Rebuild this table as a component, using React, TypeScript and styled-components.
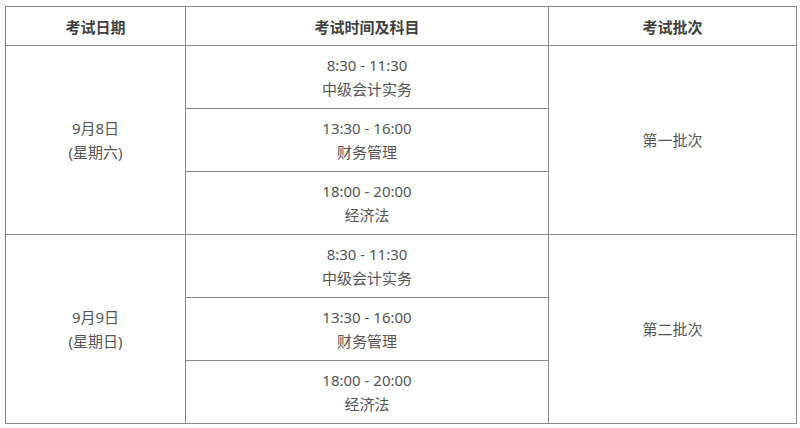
import React from "react";
import styled, { createGlobalStyle } from "styled-components";

const Global = createGlobalStyle`
  html, body { margin: 0; padding: 0; background: #ffffff; }
  body { font-family: "Noto Sans", "Noto Sans CJK SC", sans-serif; }
`;

const Page = styled.div`
  padding: 6px 0 0 5px;
`;

const Table = styled.table`
  border-collapse: collapse;
  table-layout: fixed;
  width: 791px;
  font-size: 15px;
  color: #555555;
`;

const HeadCell = styled.th`
  border: 1px solid #8a8a8a;
  height: 38px;
  padding: 0;
  font-weight: 700;
  font-size: 15px;
  color: #404040;
  text-align: center;
  vertical-align: middle;
`;

const Cell = styled.td`
  border: 1px solid #8a8a8a;
  height: 62px;
  padding: 0;
  text-align: center;
  vertical-align: middle;
  line-height: 24px;
`;

const Line = styled.div`
  white-space: nowrap;
`;

type Session = { time: string; subject: string };

const sessions: Session[] = [
  { time: "8:30 - 11:30", subject: "中级会计实务" },
  { time: "13:30 - 16:00", subject: "财务管理" },
  { time: "18:00 - 20:00", subject: "经济法" },
];

const days = [
  { date: "9月8日", week: "(星期六)", batch: "第一批次" },
  { date: "9月9日", week: "(星期日)", batch: "第二批次" },
];

export default function App() {
  return (
    <>
      <Global />
      <Page>
        <Table>
          <colgroup>
            <col style={{ width: 180 }} />
            <col style={{ width: 363 }} />
            <col style={{ width: 248 }} />
          </colgroup>
          <thead>
            <tr>
              <HeadCell>考试日期</HeadCell>
              <HeadCell>考试时间及科目</HeadCell>
              <HeadCell>考试批次</HeadCell>
            </tr>
          </thead>
          <tbody>
            {days.map((d) =>
              sessions.map((s, i) => (
                <tr key={d.date + i}>
                  {i === 0 && (
                    <Cell rowSpan={3}>
                      <Line>{d.date}</Line>
                      <Line>{d.week}</Line>
                    </Cell>
                  )}
                  <Cell>
                    <Line>{s.time}</Line>
                    <Line>{s.subject}</Line>
                  </Cell>
                  {i === 0 && <Cell rowSpan={3}>{d.batch}</Cell>}
                </tr>
              ))
            )}
          </tbody>
        </Table>
      </Page>
    </>
  );
}
